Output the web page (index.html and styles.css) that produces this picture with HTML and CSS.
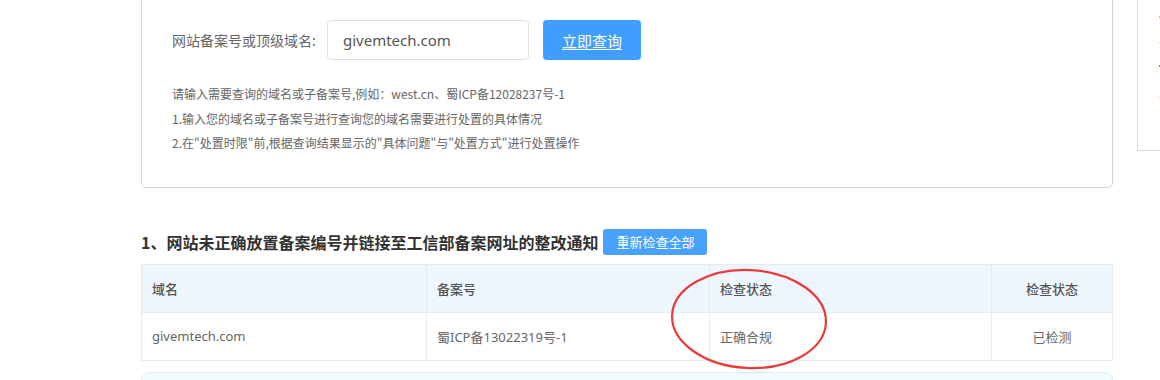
FILE: index.html
```html
<!DOCTYPE html>
<html lang="zh-CN">
<head>
<meta charset="utf-8">
<title>备案检查</title>
<link rel="stylesheet" href="styles.css">
</head>
<body>
<div class="page">
  <main class="main">
    <section class="card">
      <div class="form-row">
        <label class="form-label">网站备案号或顶级域名:</label>
        <div class="input">givemtech.com</div>
        <a class="btn-query" href="#">立即查询</a>
      </div>
      <div class="help">
        <p>请输入需要查询的域名或子备案号,例如：west.cn、蜀ICP备12028237号-1</p>
        <p>1.输入您的域名或子备案号进行查询您的域名需要进行处置的具体情况</p>
        <p>2.在"处置时限"前,根据查询结果显示的"具体问题"与"处置方式"进行处置操作</p>
      </div>
    </section>

    <div class="section-head">
      <h2 class="section-title">1、网站未正确放置备案编号并链接至工信部备案网址的整改通知</h2>
      <button class="btn-recheck">重新检查全部</button>
    </div>

    <div class="table-wrap">
      <table class="result">
        <thead>
          <tr>
            <th class="c1">域名</th>
            <th class="c2">备案号</th>
            <th class="c3">检查状态</th>
            <th class="c4">检查状态</th>
          </tr>
        </thead>
        <tbody>
          <tr>
            <td>givemtech.com</td>
            <td>蜀ICP备13022319号-1</td>
            <td>正确合规</td>
            <td class="center">已检测</td>
          </tr>
        </tbody>
      </table>
      <svg class="mark" width="170" height="112" viewBox="0 0 170 112">
        <ellipse cx="85" cy="56" rx="77" ry="49" fill="none" stroke="#ea3a3a" stroke-width="2.2" transform="rotate(3 85 56)"/>
      </svg>
    </div>

    <div class="next-box"></div>
  </main>
  <aside class="side">
    <span class="dot d1"></span>
    <span class="dot d2"></span>
    <span class="dot d3"></span>
    <span class="dot d4"></span>
  </aside>
</div>
</body>
</html>
```

FILE: styles.css
```css
* { box-sizing: border-box; }
html, body {
  margin: 0;
  padding: 0;
  background: #fff;
  overflow: hidden;
}
body {
  font-family: "Noto Sans CJK SC", "Noto Sans", sans-serif;
  color: #666;
}
.page {
  display: flex;
  align-items: flex-start;
  width: 1400px;
}
.main {
  width: 972px;
  margin-left: 141px;
  flex-shrink: 0;
}
.card {
  margin-top: -11px;
  border: 1px solid #d4d4d4;
  border-radius: 5px;
  padding: 30px 30px 31px 30px;
}
.form-row {
  display: flex;
  align-items: center;
  height: 40px;
}
.form-label {
  font-size: 14px;
  color: #666;
  width: 155px;
  flex-shrink: 0;
}
.input {
  width: 202px;
  height: 40px;
  border: 1px solid #dcdfe6;
  border-radius: 4px;
  padding-left: 15px;
  font-family: "Noto Sans", "Noto Sans CJK SC", sans-serif;
  font-size: 15px;
  color: #555;
  display: flex;
  align-items: center;
}
.btn-query {
  margin-left: 14px;
  width: 98px;
  height: 40px;
  border-radius: 4px;
  background: #409eff;
  color: #fff;
  font-size: 15px;
  display: flex;
  align-items: center;
  justify-content: center;
  text-decoration: underline;
  text-underline-offset: 2px;
}
.help {
  margin-top: 22px;
}
.help p {
  margin: 0;
  font-size: 12px;
  line-height: 24.5px;
  color: #666;
}
.section-head {
  display: flex;
  align-items: center;
  margin-top: 41px;
  height: 26px;
}
.section-title {
  margin: 0;
  font-size: 16px;
  font-weight: bold;
  color: #333;
  white-space: nowrap;
}
.btn-recheck {
  margin-left: 5px;
  width: 104px;
  height: 26px;
  border: none;
  border-radius: 3px;
  background: #47a1fd;
  color: #fff;
  font-family: inherit;
  font-size: 13px;
  padding: 0;
}
.table-wrap {
  position: relative;
  margin-top: 9px;
}
.result {
  width: 971px;
  border-collapse: collapse;
  table-layout: fixed;
  font-size: 13px;
}
.result th, .result td {
  border: 1px solid #e6ebf2;
  height: 48px;
  padding: 0 10px;
  text-align: left;
}
.result th {
  background: #eef6fe;
  color: #555;
  font-weight: 500;
}
.result td {
  color: #666;
}
.result td:first-child,
.result td:nth-child(2) {
  font-family: "Noto Sans", "Noto Sans CJK SC", sans-serif;
}
.result .c1 { width: 285px; }
.result .c2 { width: 283px; }
.result .c3 { width: 282px; }
.result .c4 { width: 121px; text-align: center; }
.result .center { text-align: center; }
.mark {
  position: absolute;
  left: 523px;
  top: -1px;
}
.next-box {
  margin-top: 11px;
  height: 40px;
  border: 1px solid #dff0f3;
  border-radius: 8px;
  background: #f1fdff;
}
.side {
  margin-left: 24px;
  width: 200px;
  height: 151px;
  border-left: 1px solid #d9d9d9;
  border-bottom: 1px solid #d9d9d9;
  position: relative;
  flex-shrink: 0;
}
.dot {
  position: absolute;
  left: 21px;
  width: 2px;
  height: 2px;
}
.d1 { top: 16px; background: #f0c070; }
.d2 { top: 42px; background: #f4dfb8; }
.d3 { top: 65px; background: #c07040; }
.d4 { top: 97px; background: #f4e4c4; }
```
